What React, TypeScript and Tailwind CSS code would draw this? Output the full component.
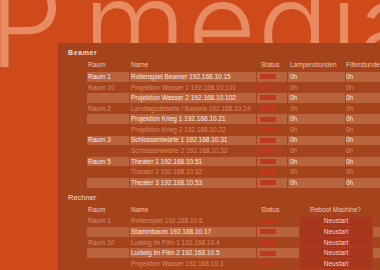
const beamer = [
  { raum: "Raum 1", name: "Rollenspiel Beamer 192.168.10.15", hi: true },
  { raum: "Raum 10", name: "Projektion Wasser 1 192.168.10.101", hi: false },
  { raum: "", name: "Projektion Wasser 2 192.168.10.102", hi: true },
  { raum: "Raum 2", name: "Landtagsdebatte / Bavaria 192.168.10.24", hi: false },
  { raum: "", name: "Projektion Krieg 1 192.168.10.21", hi: true },
  { raum: "", name: "Projektion Krieg 2 192.168.10.22", hi: false },
  { raum: "Raum 3", name: "Schlossentwürfe 1 192.168.10.31", hi: true },
  { raum: "", name: "Schlossentwürfe 2 192.168.10.32", hi: false },
  { raum: "Raum 5", name: "Theater 1 192.168.10.51", hi: true },
  { raum: "", name: "Theater 2 192.168.10.52", hi: false },
  { raum: "", name: "Theater 3 192.168.10.53", hi: true },
];

const rechner = [
  { raum: "Raum 1", name: "Rollenspiel 192.168.10.6", hi: false },
  { raum: "", name: "Stammbaum 192.168.10.17", hi: true },
  { raum: "Raum 10", name: "Ludwig im Film 1 192.168.10.4", hi: false },
  { raum: "", name: "Ludwig im Film 2 192.168.10.5", hi: true },
  { raum: "", name: "Projektion Wasser 192.168.10.3", hi: false },
];

const BEAMER_COLS = "grid grid-cols-[42px_126px_30px_57px_1fr] gap-x-px";
const RECHNER_COLS = "grid grid-cols-[42px_126px_42px_72px_1fr] gap-x-px";

function cell(hi: boolean) {
  return hi
    ? "h-[9.6px] flex items-center bg-[#b9643f] text-[#fbe9de]"
    : "h-[9.6px] flex items-center text-[#d98c68]";
}

function StatusBar() {
  return <span className="ml-[3px] block h-[5px] w-[16px] bg-[#bd3a20]" />;
}

export default function App() {
  return (
    <div
      className="relative h-[270px] w-[380px] overflow-hidden bg-[#cf4a1b]"
      style={{ fontFamily: '"Liberation Sans", Arial, sans-serif' }}
    >
      <div className="relative h-[43px]">
        <span
          className="absolute left-[-11px] top-[-35px] whitespace-nowrap text-[118px] font-[270] leading-none tracking-[1.5px] text-[#e78c62] [word-spacing:-16px]"
          style={{ fontFamily: 'Inter, "Open Sans", sans-serif' }}
        >
          P media
        </span>
      </div>

      <div className="relative ml-[58px] h-[227px] bg-[#a5431c] pt-[5px] text-[6.5px]">
        <div className="ml-[10px] h-[10px] text-[7px] font-bold leading-[10px] tracking-[0.6px] text-[#f6dccb]">
          Beamer
        </div>

        <div className={`${BEAMER_COLS} mt-[2px] ml-[29px] h-[10px] items-center text-[#f1c6ad]`}>
          <span className="pl-px">Raum</span>
          <span className="pl-px">Name</span>
          <span className="pl-[4px]">Status</span>
          <span className="pl-[2px]">Lampenstunden</span>
          <span className="pl-0 whitespace-nowrap">Filterstunden</span>
        </div>

        <div className="mt-[2px] ml-[29px] flex flex-col gap-y-px">
          {beamer.map((r) => (
            <div key={r.name} className={BEAMER_COLS}>
              <span className={`${cell(r.hi)} pl-px`}>{r.raum}</span>
              <span className={`${cell(r.hi)} pl-px whitespace-nowrap`}>{r.name}</span>
              <span className={cell(r.hi)}>
                <StatusBar />
              </span>
              <span className={`${cell(r.hi)} pl-[2px]`}>0h</span>
              <span className={`${cell(r.hi)} pl-0`}>0h</span>
            </div>
          ))}
        </div>

        <div className="mt-[5px] ml-[10px] h-[10px] text-[7.5px] leading-[10px] text-[#f6dccb]">
          Rechner
        </div>

        <div className={`${RECHNER_COLS} mt-[2px] ml-[29px] h-[10px] items-center text-[#f1c6ad]`}>
          <span className="pl-px">Raum</span>
          <span className="pl-px">Name</span>
          <span className="pl-[4px]">Status</span>
          <span className="pl-[10px] whitespace-nowrap">Reboot Machine?</span>
          <span />
        </div>

        <div className="mt-[2px] ml-[29px] flex flex-col gap-y-px">
          {rechner.map((r) => (
            <div key={r.name} className={RECHNER_COLS}>
              <span className={`${cell(r.hi)} pl-px`}>{r.raum}</span>
              <span className={`${cell(r.hi)} pl-px whitespace-nowrap`}>{r.name}</span>
              <span className={cell(r.hi)}>
                <StatusBar />
              </span>
              <span className={cell(r.hi)}>
                <button
                  type="button"
                  className="flex h-full w-full items-center justify-center bg-[#a9351d] text-[6.5px] text-[#f4d2c1]"
                >
                  Neustart
                </button>
              </span>
              <span className={cell(r.hi)} />
            </div>
          ))}
        </div>
      </div>
    </div>
  );
}
